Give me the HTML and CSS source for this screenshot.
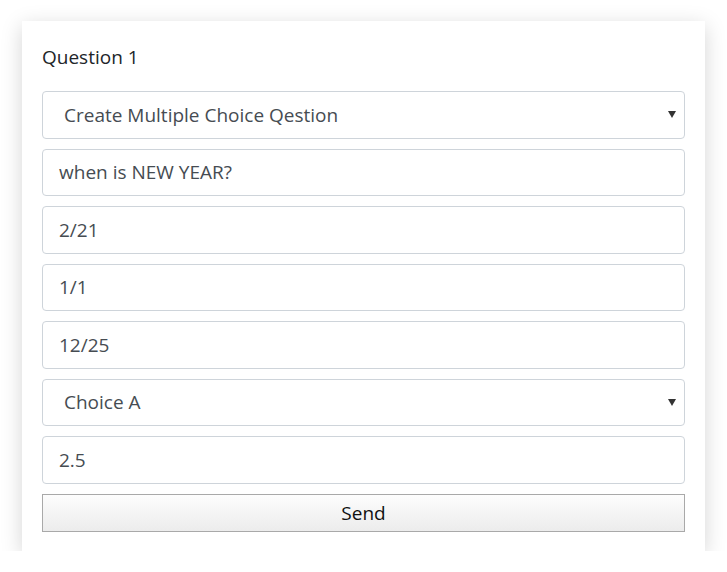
FILE: index.html
```html
<!DOCTYPE html>
<html>
<head>
<meta charset="utf-8">
<link rel="stylesheet" href="styles.css">
</head>
<body>
<div class="card">
  <div class="title">Question 1</div>
  <div class="field select"><span class="sel-text">Create Multiple Choice Qestion</span><span class="caret"></span></div>
  <div class="field">when is NEW YEAR?</div>
  <div class="field">2/21</div>
  <div class="field">1/1</div>
  <div class="field">12/25</div>
  <div class="field select"><span class="sel-text">Choice A</span><span class="caret"></span></div>
  <div class="field">2.5</div>
  <button class="send">Send</button>
</div>
</body>
</html>
```
FILE: styles.css
```css
html, body {
  margin: 0;
  padding: 0;
  background: #ffffff;
}
body {
  padding: 21px 22px 0 22px;
  font-family: "Open Sans", "Noto Sans", sans-serif;
}
.card {
  width: 683px;
  box-sizing: border-box;
  background: #fff;
  padding: 24px 20px 19px 20px;
  box-shadow: 0 5px 20px rgba(0,0,0,0.17);
}
.title {
  font-size: 19px;
  color: #212529;
  line-height: 24px;
  margin-bottom: 22px;
}
.field {
  box-sizing: border-box;
  height: 47.5px;
  border: 1px solid #ced4da;
  border-radius: 4px;
  margin-bottom: 10px;
  padding: 0 16px;
  display: flex;
  align-items: center;
  font-size: 19px;
  color: #464c52;
}
.select {
  padding-left: 21px;
  justify-content: space-between;
  padding-right: 8px;
}
.caret {
  width: 0;
  height: 0;
  border-left: 4px solid transparent;
  border-right: 4px solid transparent;
  border-top: 7px solid #333;
}
.send {
  display: block;
  width: 100%;
  height: 38px;
  margin: 0;
  border: 1px solid #a9a9a9;
  border-radius: 0;
  background: linear-gradient(#fdfdfd, #ececec);
  font-family: "Open Sans", "Noto Sans", sans-serif;
  font-size: 19px;
  color: #111;
}
```
